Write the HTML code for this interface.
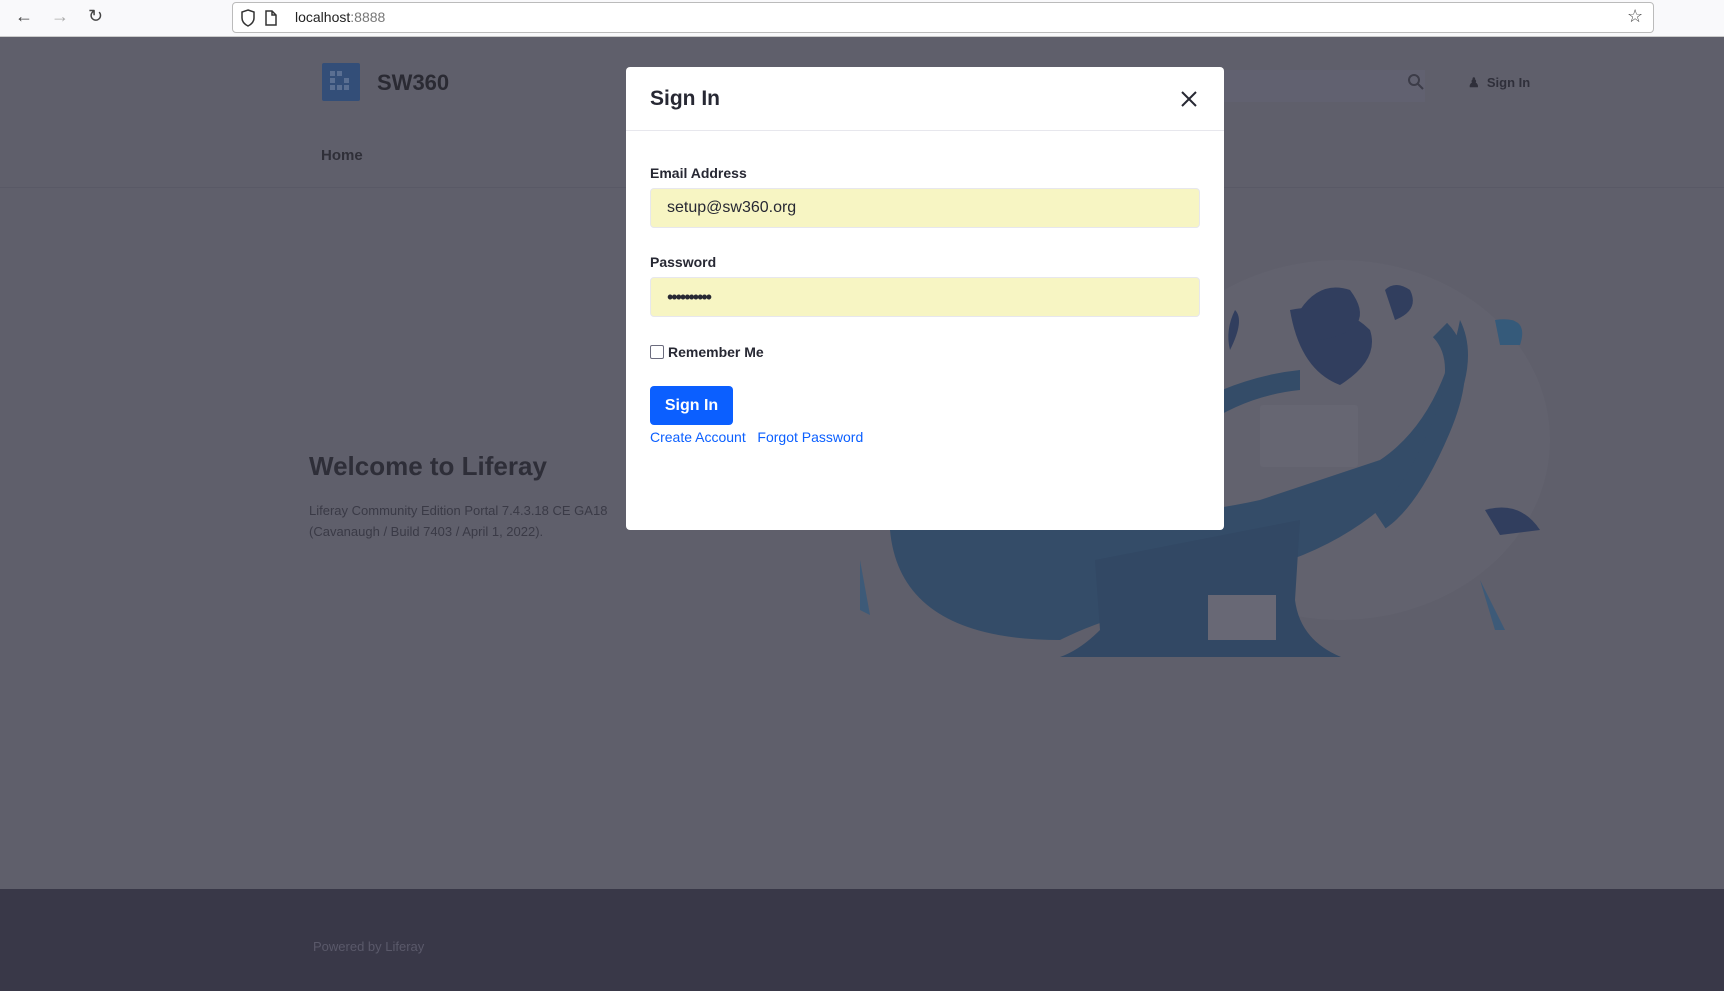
<!DOCTYPE html>
<html><head><meta charset="utf-8"><style>
*{margin:0;padding:0;box-sizing:border-box}
body{width:1724px;height:991px;overflow:hidden;font-family:"Liberation Sans",sans-serif;background:#5f5f6b;position:relative}
.bar{position:absolute;left:0;top:0;width:1724px;height:37px;background:#f9f9fb;border-bottom:1px solid #ccc}
.url{position:absolute;left:232px;top:2px;width:1422px;height:31px;border:1px solid #bbb;border-radius:4px;background:#fff;font-size:14px;color:#222;line-height:29px;padding-left:62px}
.url span{color:#777}
.ab{position:absolute;font-size:18px;color:#444;top:6px}
.foot{position:absolute;left:0;top:889px;width:1724px;height:102px;background:#393848}
.abs{position:absolute}
.modal{position:absolute;left:626px;top:67px;width:598px;height:463px;background:#fff;border-radius:4px}
.lbl{position:absolute;left:24px;font-size:14px;font-weight:bold;color:#272833}
.inp{position:absolute;left:24px;width:550px;height:40px;background:#f7f5c3;border:1px solid #e7e7ed;border-radius:4px;font-size:16px;color:#272833;padding-left:16px;line-height:38px}
a{color:#0b5fff;text-decoration:none}
</style></head><body>
<div class="bar">
<div class="ab" style="left:15px">&#8592;</div><div class="ab" style="left:51px;color:#aaa">&#8594;</div><div class="ab" style="left:88px">&#8635;</div>
<div class="url">localhost<span>:8888</span></div>
<svg class="abs" style="left:240px;top:9px" width="40" height="18"><path d="M8 1 L14 3 V9 Q14 14 8 17 Q2 14 2 9 V3Z" fill="none" stroke="#333" stroke-width="1.5"/><path d="M32 2 H26 V16 H36 V6Z M32 2 V6 H36" fill="none" stroke="#333" stroke-width="1.5"/></svg>
<div class="ab" style="left:1627px;font-size:18px">&#9734;</div>
</div>
<div class="abs" style="left:322px;top:63px;width:38px;height:38px;background:#334e78;border-radius:2px"></div>
<svg class="abs" style="left:327px;top:68px" width="28" height="28" fill="#5a6f92"><rect x="3" y="3" width="5" height="5"/><rect x="10" y="3" width="5" height="5"/><rect x="3" y="10" width="5" height="5"/><rect x="17" y="10" width="5" height="5"/><rect x="10" y="17" width="5" height="5"/><rect x="17" y="17" width="5" height="5"/><rect x="3" y="17" width="5" height="5"/></svg>
<div class="abs" style="left:377px;top:70px;font-size:22px;font-weight:bold;color:#2a2a33">SW360</div>
<div class="abs" style="left:321px;top:147px;font-size:15px;font-weight:bold;color:#2f2f38">Home</div>
<div class="abs" style="left:0;top:187px;width:1724px;height:1px;background:#595966"></div>
<div class="abs" style="left:1210px;top:70px;width:215px;height:32px;background:#616170"></div>
<svg class="abs" style="left:1407px;top:73px" width="18" height="18"><circle cx="7" cy="7" r="5" fill="none" stroke="#3c3c48" stroke-width="2"/><path d="M11 11 L16 16" stroke="#3c3c48" stroke-width="2"/></svg>
<div class="abs" style="left:1468px;top:75px;font-size:13px;font-weight:bold;color:#2f2f3a">&#9823; &nbsp;Sign In</div>
<div class="abs" style="left:309px;top:451px;font-size:26px;font-weight:bold;color:#2e2e38">Welcome to Liferay</div>
<div class="abs" style="left:309px;top:500px;font-size:13px;line-height:21px;color:#3a3a46">Liferay Community Edition Portal 7.4.3.18 CE GA18<br>(Cavanaugh / Build 7403 / April 1, 2022).</div>
<svg class="abs" style="left:0;top:0" width="1724" height="889">
<ellipse cx="1340" cy="440" rx="210" ry="180" fill="#62626e"/>
<path d="M890 530 Q900 640 1060 640 Q1120 610 1200 600 L1290 560 Q1400 520 1450 420 Q1480 360 1460 320 Q1440 420 1380 460 Q1320 480 1260 500 Q1170 520 1100 510 Q1040 505 1010 530Z" fill="#344c68"/>
<path d="M1100 470 Q1200 380 1300 370 L1300 390 Q1200 400 1130 500Z" fill="#344c68"/>
<path d="M1095 560 L1100 630 Q1080 650 1060 657 H1341 Q1300 640 1295 600 L1300 520Z" fill="#324864"/>
<path d="M1440 330 Q1470 360 1440 430 Q1410 500 1380 520" stroke="#344c68" stroke-width="20" fill="none"/>
<path d="M1290 310 Q1340 300 1370 330 Q1380 360 1340 385 Q1300 370 1290 310Z" fill="#313e5e"/>
<path d="M1300 310 Q1320 280 1350 290 Q1380 330 1320 340Z" fill="#313e5e"/>
<path d="M1385 290 Q1395 280 1410 290 Q1420 310 1395 320Z" fill="#313e5e"/>
<path d="M1235 310 Q1245 320 1230 350 Q1225 330 1235 310Z" fill="#313e5e"/>
<path d="M1495 320 Q1530 315 1520 345 L1500 345Z" fill="#355a7a"/>
<path d="M1485 510 Q1520 500 1540 530 L1500 535Z" fill="#313e5e"/>
<rect x="1260" y="405" width="98" height="62" rx="3" fill="#666672"/>
<rect x="1208" y="595" width="68" height="45" fill="#686875"/>
<path d="M860 560 L870 615 L860 610Z" fill="#3d5a78"/>
<path d="M1480 580 L1495 630 L1505 630Z" fill="#3d5a78"/>
</svg>
<div class="foot"><div class="abs" style="left:313px;top:50px;font-size:13px;color:#5a596a">Powered by Liferay</div></div>
<div class="modal">
<div class="abs" style="left:24px;top:20px;font-size:21px;font-weight:bold;color:#272833">Sign In</div>
<svg class="abs" style="left:554px;top:23px" width="18" height="18"><path d="M2 2 L16 16 M16 2 L2 16" stroke="#272833" stroke-width="2"/></svg>
<div class="abs" style="left:0;top:63px;width:598px;height:1px;background:#e7e7ed"></div>
<div class="lbl" style="top:98px">Email Address</div>
<div class="inp" style="top:121px">setup@sw360.org</div>
<div class="lbl" style="top:187px">Password</div>
<div class="inp" style="top:210px;font-size:18px;letter-spacing:-2px">••••••••••</div>
<div class="abs" style="left:24px;top:278px;width:14px;height:14px;border:1px solid #6b6c7e;border-radius:2px"></div>
<div class="lbl" style="left:42px;top:277px">Remember Me</div>
<div class="abs" style="left:24px;top:319px;width:83px;height:39px;background:#0b5fff;border-radius:4px;color:#fff;font-size:16px;font-weight:bold;text-align:center;line-height:39px">Sign In</div>
<div class="abs" style="left:24px;top:362px;font-size:14px"><a>Create Account</a> &nbsp; <a>Forgot Password</a></div>
</div>
</body></html>
